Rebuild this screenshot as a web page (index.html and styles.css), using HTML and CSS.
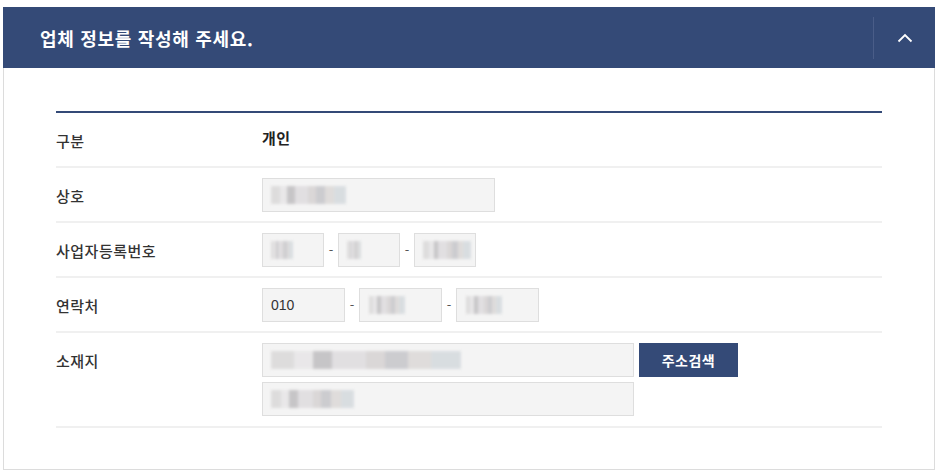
FILE: index.html
```html
<!DOCTYPE html>
<html lang="ko">
<head>
<meta charset="utf-8">
<link rel="stylesheet" href="styles.css">
</head>
<body>
<section class="panel">
  <header class="panel-head">
    <h2 class="panel-title">업체 정보를 작성해 주세요.</h2>
    <button class="toggle" aria-label="접기">
      <svg width="16" height="10" viewBox="0 0 16 10"><path d="M1.5 8.5 L8 2 L14.5 8.5" fill="none" stroke="#fff" stroke-width="1.8"/></svg>
    </button>
  </header>
  <div class="panel-body">
    <div class="form">
      <div class="row">
        <div class="label">구분</div>
        <div class="value text-value">개인</div>
      </div>
      <div class="row">
        <div class="label">상호</div>
        <div class="value">
          <div class="input w-name"><span class="mosaic m-name"></span></div>
        </div>
      </div>
      <div class="row">
        <div class="label">사업자등록번호</div>
        <div class="value">
          <div class="input w-biz"><span class="mosaic m-biz1"></span></div>
          <span class="dash">-</span>
          <div class="input w-biz"><span class="mosaic m-biz2"></span></div>
          <span class="dash">-</span>
          <div class="input w-biz"><span class="mosaic m-biz3"></span></div>
        </div>
      </div>
      <div class="row">
        <div class="label">연락처</div>
        <div class="value">
          <div class="input w-tel">010</div>
          <span class="dash">-</span>
          <div class="input w-tel"><span class="mosaic m-tel"></span></div>
          <span class="dash">-</span>
          <div class="input w-tel"><span class="mosaic m-tel"></span></div>
        </div>
      </div>
      <div class="row row-tall">
        <div class="label">소재지</div>
        <div class="value value-stack">
          <div class="line">
            <div class="input w-addr"><span class="mosaic m-addr1"></span></div>
            <button class="btn">주소검색</button>
          </div>
          <div class="line">
            <div class="input w-addr"><span class="mosaic m-addr2"></span></div>
          </div>
        </div>
      </div>
    </div>
  </div>
</section>
</body>
</html>
```

FILE: styles.css
```css
* { box-sizing: border-box; }
body {
  margin: 0;
  background: #fff;
  font-family: "Noto Sans CJK KR", "Noto Sans", sans-serif;
  color: #333;
}
.panel {
  margin: 7px 0 0 3px;
  width: 932px;
}
.panel-head {
  height: 61px;
  background: #344a77;
  display: flex;
  align-items: center;
  justify-content: space-between;
  padding-left: 37px;
}
.panel-title {
  margin: 0;
  color: #fff;
  font-size: 18px;
  font-weight: 700;
  letter-spacing: 0.7px;
}
.toggle {
  width: 62px;
  height: 42px;
  border: 0;
  border-left: 1px solid #4a5d88;
  background: transparent;
  display: flex;
  align-items: center;
  justify-content: center;
  padding: 0;
}
.panel-body {
  border: 1px solid #dcdcdc;
  border-top: 0;
  padding: 43px 52px 41px;
}
.form {
  border-top: 2px solid #344a77;
}
.row {
  display: flex;
  min-height: 55px;
  border-bottom: 2px solid #f0f0f0;
  align-items: center;
}
.row-tall { align-items: flex-start; }
.label {
  width: 206px;
  font-size: 15px;
  font-weight: 500;
  color: #333;
  letter-spacing: 0.5px;
  padding-top: 1px;
}
.row-tall .label { padding-top: 17px; }
.value {
  display: flex;
  align-items: center;
}
.text-value {
  font-size: 15px;
  font-weight: 600;
  letter-spacing: 0.5px;
  margin-top: -5px;
  color: #222;
}
.value-stack {
  flex-direction: column;
  align-items: flex-start;
  gap: 5px;
  padding: 10px 0;
}
.line { display: flex; gap: 5px; }
.input {
  height: 34px;
  background: #f4f4f4;
  border: 1px solid #dedede;
  display: flex;
  align-items: center;
  padding-left: 8px;
  font-size: 14px;
  font-family: "Liberation Sans", Arial, sans-serif;
  color: #333;
}
.w-name { width: 233px; }
.w-biz { width: 62px; }
.w-tel { width: 83px; }
.w-addr { width: 372px; }
.dash {
  width: 14px;
  text-align: center;
  font-size: 13px;
  color: #555;
}
.btn {
  width: 99px;
  height: 34px;
  border: 0;
  background: #344a77;
  color: #fff;
  font-family: "Noto Sans CJK KR", sans-serif;
  font-size: 14px;
  font-weight: 700;
  letter-spacing: 0.5px;
  padding: 0;
}
.mosaic {
  display: block;
  height: 18px;
  filter: blur(1.5px);
  opacity: 0.6;
  background:
    linear-gradient(90deg, #cfcdcd 0 12%, #e2e0e2 12% 22%, #a9a7aa 22% 32%, #d5d2d6 32% 50%, #c9c4c4 50% 60%, #b2b2b8 60% 72%, #d2cdcb 72% 84%, #c7cfd4 84% 100%);
}
.m-name { width: 75px; }
.m-biz1 { width: 22px; }
.m-biz2 { width: 14px; }
.m-biz3 { width: 48px; }
.m-tel { width: 36px; margin-left: 1px; }
.m-addr1 { width: 190px; }
.m-addr2 { width: 83px; }
```
